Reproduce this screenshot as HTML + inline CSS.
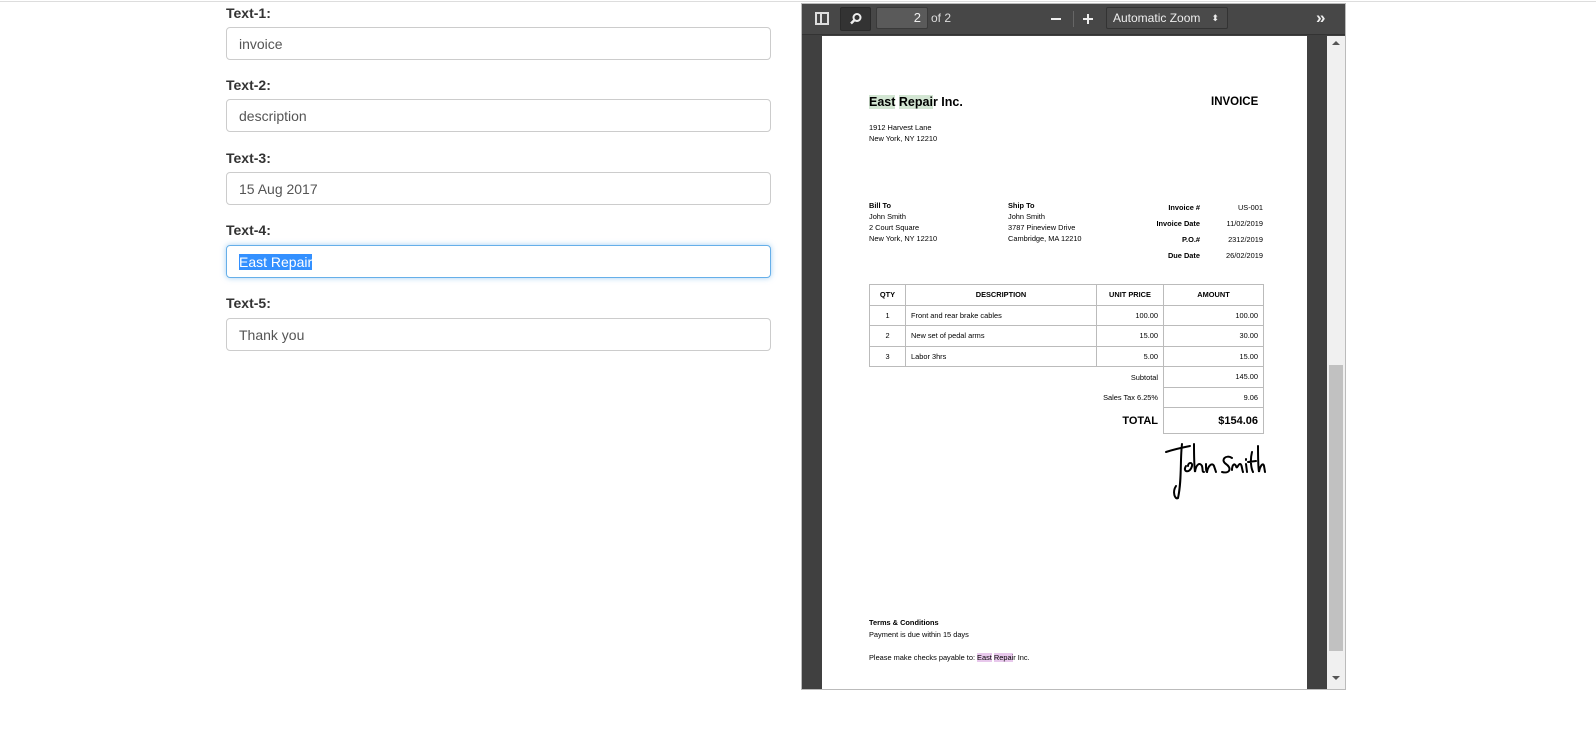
<!DOCTYPE html>
<html><head><meta charset="utf-8"><style>
*{margin:0;padding:0;box-sizing:border-box}
body{width:1596px;height:756px;background:#fff;font-family:"Liberation Sans",Arial,sans-serif;position:relative;overflow:hidden}
.a{position:absolute;white-space:nowrap}
.lbl{font-size:14px;font-weight:bold;color:#333}
.inp{position:absolute;left:226px;width:545px;height:33px;border:1px solid #ccc;border-radius:4px;font-size:14px;color:#555;padding:8px 12px;line-height:16px}
.p{font-size:7.4px;color:#000}
.b{font-weight:bold}
.hl{background:#d3e6d3}
.pk{background:#e8c8ec}
table{border-collapse:collapse;position:absolute;left:869px;top:284px;font-size:7.4px}
td{border:1px solid #bbb;height:20.5px;padding:0 5px}
</style></head><body>
<div class="a" style="left:0;top:1px;width:1596px;height:1px;background:#ddd"></div>
<div class="a lbl" style="left:226px;top:5px">Text-1:</div>
<div class="inp" style="top:27px">invoice</div>
<div class="a lbl" style="left:226px;top:77px">Text-2:</div>
<div class="inp" style="top:99px">description</div>
<div class="a lbl" style="left:226px;top:150px">Text-3:</div>
<div class="inp" style="top:172px">15 Aug 2017</div>
<div class="a lbl" style="left:226px;top:222px">Text-4:</div>
<div class="inp" style="top:245px;border-color:#66afe9;box-shadow:0 0 6px rgba(102,175,233,.6);color:#fff"><span style="background:#3390ff">East Repair</span></div>
<div class="a lbl" style="left:226px;top:295px">Text-5:</div>
<div class="inp" style="top:318px">Thank you</div>

<div class="a" style="left:801px;top:3px;width:545px;height:687px;background:#404040;border:1px solid #bbb"></div>
<div class="a" style="left:802px;top:4px;width:543px;height:31px;background:#474747;border-bottom:1px solid #333"></div>
<div class="a" style="left:815px;top:12px;width:14px;height:13px;border:2px solid #ddd"><div style="position:absolute;left:3px;top:0;width:2px;height:9px;background:#ddd"></div></div>
<div class="a" style="left:840px;top:7px;width:31px;height:24px;background:#333;border:1px solid #2a2a2a;border-radius:2px;text-align:center">
<svg width="14" height="14" viewBox="0 0 14 14" style="margin-top:4px"><circle cx="8" cy="5.5" r="3.5" fill="none" stroke="#eee" stroke-width="2"/><path d="M5.5 8L2 11.5" stroke="#eee" stroke-width="2.5"/></svg></div>
<div class="a" style="left:876px;top:7px;width:52px;height:22px;background:#5a5a5a;border:1px solid #3a3a3a;border-radius:2px;color:#eee;font-size:13px;text-align:right;padding-right:6px;line-height:20px">2</div>
<div class="a" style="left:931px;top:11px;color:#ddd;font-size:12px">of 2</div>
<div class="a" style="left:1051px;top:18px;width:10px;height:2px;background:#eee"></div>
<div class="a" style="left:1073px;top:11px;width:1px;height:16px;background:#666"></div>
<div class="a" style="left:1083px;top:18px;width:10px;height:2px;background:#eee"></div>
<div class="a" style="left:1087px;top:14px;width:2px;height:10px;background:#eee"></div>
<div class="a" style="left:1106px;top:7px;width:122px;height:22px;background:#4a4a4a;border:1px solid #333;border-radius:2px;color:#eee;font-size:12px;padding-left:6px;line-height:20px">Automatic Zoom<span style="position:absolute;right:8px;font-size:9px">⬍</span></div>
<div class="a" style="left:1316px;top:8px;color:#eee;font-size:17px;font-weight:bold">»</div>
<div class="a" style="left:1327px;top:36px;width:18px;height:653px;background:#f0f0f0"></div>
<div class="a" style="left:1329px;top:365px;width:14px;height:286px;background:#c1c1c1"></div>
<div class="a" style="left:1332px;top:41px;border:4px solid transparent;border-bottom:4px solid #555;border-top:0"></div>
<div class="a" style="left:1332px;top:676px;border:4px solid transparent;border-top:4px solid #555;border-bottom:0"></div>
<div class="a" style="left:822px;top:36px;width:485px;height:653px;background:#fff"></div>
<div class="a b" style="left:869px;top:95px;font-size:12.5px"><span class="hl">East</span> <span class="hl">Repai</span>r Inc.</div>
<div class="a b" style="left:1211px;top:96px;font-size:11.5px">INVOICE</div>
<div class="a p" style="left:869px;top:122px;line-height:11px">1912 Harvest Lane<br>New York, NY 12210</div>
<div class="a p" style="left:869px;top:200px;line-height:11px"><b>Bill To</b><br>John Smith<br>2 Court Square<br>New York, NY 12210</div>
<div class="a p" style="left:1008px;top:200px;line-height:11px"><b>Ship To</b><br>John Smith<br>3787 Pineview Drive<br>Cambridge, MA 12210</div>
<div class="a p b" style="left:1140px;top:200px;width:60px;text-align:right;line-height:16px">Invoice #<br>Invoice Date<br>P.O.#<br>Due Date</div>
<div class="a p" style="left:1205px;top:200px;width:58px;text-align:right;line-height:16px">US-001<br>11/02/2019<br>2312/2019<br>26/02/2019</div>
<table>
<tr class="b"><td style="width:36px;text-align:center">QTY</td><td style="width:191px;text-align:center">DESCRIPTION</td><td style="width:67px;text-align:center">UNIT PRICE</td><td style="width:100px;text-align:center">AMOUNT</td></tr>
<tr><td style="text-align:center">1</td><td>Front and rear brake cables</td><td style="text-align:right">100.00</td><td style="text-align:right">100.00</td></tr>
<tr><td style="text-align:center">2</td><td>New set of pedal arms</td><td style="text-align:right">15.00</td><td style="text-align:right">30.00</td></tr>
<tr><td style="text-align:center">3</td><td>Labor 3hrs</td><td style="text-align:right">5.00</td><td style="text-align:right">15.00</td></tr>
<tr><td style="border:0"></td><td style="border:0"></td><td style="border:0;border-top:1px solid #bbb;text-align:right">Subtotal</td><td style="text-align:right;border-bottom:0">145.00</td></tr>
<tr><td style="border:0"></td><td style="border:0"></td><td style="border:0;text-align:right">Sales Tax 6.25%</td><td style="text-align:right">9.06</td></tr>
<tr style="height:26px"><td style="border:0"></td><td style="border:0"></td><td style="border:0;text-align:right;font-size:11px" class="b">TOTAL</td><td style="text-align:right;font-size:11px" class="b">$154.06</td></tr>
</table>
<svg class="a" style="left:1160px;top:440px" width="106" height="62" viewBox="0 0 106 62" fill="none" stroke="#000" stroke-width="2" stroke-linecap="round">
<path d="M6 12C12 10 20 8 30 6M22 4C20 20 22 40 18 58C15 60 12 52 16 46"/>
<path d="M26 26C22 32 30 34 32 26C33 22 28 22 28 26M34 4C34 14 34 24 35 32C36 24 40 22 42 26C43 30 42 32 44 32M46 24C46 28 46 32 47 32C48 26 52 22 54 26L56 32"/>
<path d="M72 18C66 14 60 20 66 24C72 28 70 34 62 32M72 30C72 26 74 22 76 26C77 30 78 24 80 24C82 24 82 30 83 32M86 24L87 32M86 19L86 20M92 12C90 20 91 28 93 32M88 22L96 21M98 6C98 16 98 26 99 32C100 26 103 22 104 26L105 32"/>
</svg>
<div class="a p" style="left:869px;top:617px;line-height:12px"><b>Terms &amp; Conditions</b><br>Payment is due within 15 days</div>
<div class="a p" style="left:869px;top:653px">Please make checks payable to: <span class="pk">East</span> <span class="pk">Repai</span>r Inc.</div>
</body></html>
